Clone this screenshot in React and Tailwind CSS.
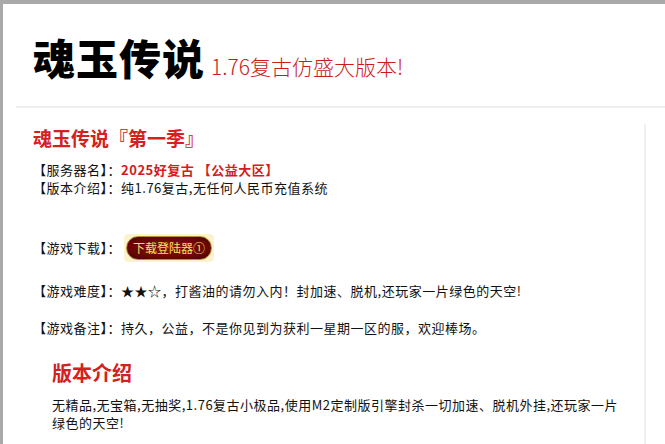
import React from "react";

const cjk = "font-['Noto_Sans_CJK_SC',sans-serif]";

function InfoRow({ label, children, className = "" }) {
  return (
    <div className={`flex items-center text-[13px] leading-[18px] tracking-[0.5px] text-[#111] ${className}`}>
      <span>【{label}】：</span>
      {children}
    </div>
  );
}

function DownloadButton() {
  return (
    <a
      href="#"
      className="ml-[3px] flex h-[28px] w-[90px] items-center justify-center rounded-[4px] bg-[#fbf3cf] p-[2px]"
    >
      <span className="flex h-full w-full items-center justify-center rounded-full border border-[#b8902e] bg-[radial-gradient(ellipse_at_center,#8e0d0d_0%,#6a0606_65%,#420202_100%)] text-[12px] leading-none tracking-normal text-[#f3e25c]">
        下载登陆器①
      </span>
    </a>
  );
}

export default function App() {
  return (
    <div className={`min-h-[444px] border-t-4 border-l-[3px] border-[#a9a9a9] bg-white ${cjk}`}>
      <div className="ml-[13px]">
        <header className="flex h-[104px] items-baseline border-b-2 border-[#eeeeee] pl-[17px] pt-[32px]">
          <h1 className="text-[42px] font-black leading-none tracking-[1px] text-black">魂玉传说</h1>
          <span className="ml-[6px] text-[21px] font-light leading-none text-[#cc1b1b]">1.76复古仿盛大版本!</span>
        </header>

        <div className="mt-4 w-[630px] border-r-2 border-[#f0f0f0] pb-6 pl-[17px]">
          <h2 className="pt-[4px] text-[19px] font-bold leading-none text-[#d42020]">魂玉传说『第一季』</h2>

          <InfoRow label="服务器名" className="mt-[14px]">
            <span className="font-bold text-[#d41c1c]">2025好复古 【公益大区】</span>
          </InfoRow>
          <InfoRow label="版本介绍">
            <span>纯1.76复古,无任何人民币充值系统</span>
          </InfoRow>

          <InfoRow label="游戏下载" className="mt-[37px] h-[28px]">
            <DownloadButton />
          </InfoRow>

          <InfoRow label="游戏难度" className="mt-[20px]">
            <span>★★☆，打酱油的请勿入内！封加速、脱机,还玩家一片绿色的天空!</span>
          </InfoRow>

          <InfoRow label="游戏备注" className="mt-[19px]">
            <span>持久，公益，不是你见到为获利一星期一区的服，欢迎棒场。</span>
          </InfoRow>

          <div className="pl-[19px]">
            <h3 className="mt-[26px] text-[20px] font-bold leading-none text-[#d42020]">版本介绍</h3>
            <p className="mt-[13px] w-[572px] text-[13px] leading-[18px] tracking-[0.5px] text-[#111]">
              无精品,无宝箱,无抽奖,1.76复古小极品,使用M2定制版引擎封杀一切加速、脱机外挂,还玩家一片绿色的天空!
            </p>
          </div>
        </div>
      </div>
    </div>
  );
}
